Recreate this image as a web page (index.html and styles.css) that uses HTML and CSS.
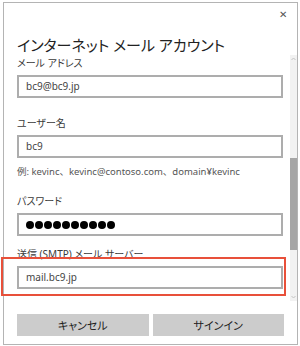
FILE: index.html
```html
<!DOCTYPE html>
<html lang="ja">
<head>
    <meta charset="UTF-8">
    <meta name="viewport" content="width=device-width, initial-scale=1.0">
    <title>インターネット メール アカウント</title>
    <link rel="stylesheet" href="styles.css">
</head>
<body>
    <div class="dialog">
        <div class="titlebar">
            <span class="close">&#x2715;</span>
        </div>
        <h1 class="heading">インターネット メール アカウント</h1>
        <div class="body">
            <div class="form">
                <div class="field first">
                    <div class="label">メール アドレス</div>
                    <div class="textbox">bc9@bc9.jp</div>
                </div>
                <div class="field">
                    <div class="label">ユーザー名</div>
                    <div class="textbox">bc9</div>
                    <div class="hint">例: kevinc、kevinc@contoso.com、domain¥kevinc</div>
                </div>
                <div class="field after-hint">
                    <div class="label">パスワード</div>
                    <div class="textbox dots">
                        <span></span><span></span><span></span><span></span><span></span>
                        <span></span><span></span><span></span><span></span><span></span>
                    </div>
                </div>
                <div class="field tight">
                    <div class="label">送信 (SMTP) メール サーバー</div>
                    <div class="textbox">mail.bc9.jp</div>
                </div>
            </div>
            <div class="scrollbar">
                <svg class="arrow" width="7" height="8" viewBox="0 0 7 8">
                    <path d="M1.5 5 L3.5 3 L5.5 5" fill="none" stroke="#c4c4c4" stroke-width="1"/>
                </svg>
                <div class="track">
                    <div class="thumb"></div>
                </div>
                <svg class="arrow" width="7" height="8" viewBox="0 0 7 8">
                    <path d="M1.5 3 L3.5 5 L5.5 3" fill="none" stroke="#c4c4c4" stroke-width="1"/>
                </svg>
            </div>
        </div>
        <div class="buttons">
            <button type="button">キャンセル</button>
            <button type="button">サインイン</button>
        </div>
    </div>
    <div class="highlight"></div>
</body>
</html>
```

FILE: styles.css
```css
body {
    margin: 0;
    padding: 0;
    background-color: #ffffff;
    font-family: "Noto Sans", "Noto Sans CJK JP", sans-serif;
    font-feature-settings: "palt";
    color: #1a1a1a;
    position: relative;
    width: 300px;
    height: 346px;
    overflow: hidden;
}

.dialog {
    margin: 2px 0 0 3px;
    width: 295px;
    height: 343px;
    box-sizing: border-box;
    border: 1px solid #b4b4b4;
    display: flex;
    flex-direction: column;
}

.titlebar {
    height: 33px;
    display: flex;
    justify-content: flex-end;
    align-items: flex-start;
}

.close {
    font-size: 10px;
    line-height: 10px;
    color: #555;
    margin: 6px 10px 0 0;
}

.heading {
    margin: 0;
    padding-left: 13px;
    font-size: 15px;
    font-weight: normal;
    line-height: 19px;
    height: 19px;
    color: #222;
}

.body {
    display: flex;
    height: 246px;
}

.form {
    flex: 1;
    padding: 0 7px 0 13px;
}

.field {
    margin-top: 18px;
}

.field.first {
    margin-top: 1px;
}

.field.after-hint {
    margin-top: 15px;
}

.field.tight {
    margin-top: 11px;
}

.label {
    font-size: 10px;
    line-height: 14px;
    color: #3a3a3a;
    margin-bottom: 5px;
}

.textbox {
    height: 23px;
    box-sizing: border-box;
    border: 2px solid #adadad;
    padding-left: 7px;
    font-size: 10px;
    line-height: 19px;
    color: #444;
}

.hint {
    font-size: 9.5px;
    line-height: 14px;
    color: #555;
    margin-top: 7px;
    font-feature-settings: normal;
}

.dots {
    display: flex;
    align-items: center;
    gap: 1px;
}

.dots span {
    width: 8px;
    height: 8px;
    border-radius: 50%;
    background-color: #000;
}

.scrollbar {
    width: 7px;
    display: flex;
    flex-direction: column;
    background-color: #f2f2f2;
}

.arrow {
    display: block;
    flex: none;
}

.track {
    flex: 1;
    padding-top: 95px;
}

.thumb {
    height: 92px;
    background-color: #a6a6a6;
}

.buttons {
    display: flex;
    gap: 4px;
    padding: 13px 13px 0 13px;
}

.buttons button {
    flex: 1;
    height: 22px;
    border: none;
    background-color: #cccccc;
    font-family: "Noto Sans", "Noto Sans CJK JP", sans-serif;
    font-feature-settings: "palt";
    font-size: 11px;
    color: #222;
    padding: 0;
}

.highlight {
    position: absolute;
    left: 1px;
    top: 257px;
    width: 285px;
    height: 39px;
    box-sizing: border-box;
    border: 2px solid #e8503a;
}
```
